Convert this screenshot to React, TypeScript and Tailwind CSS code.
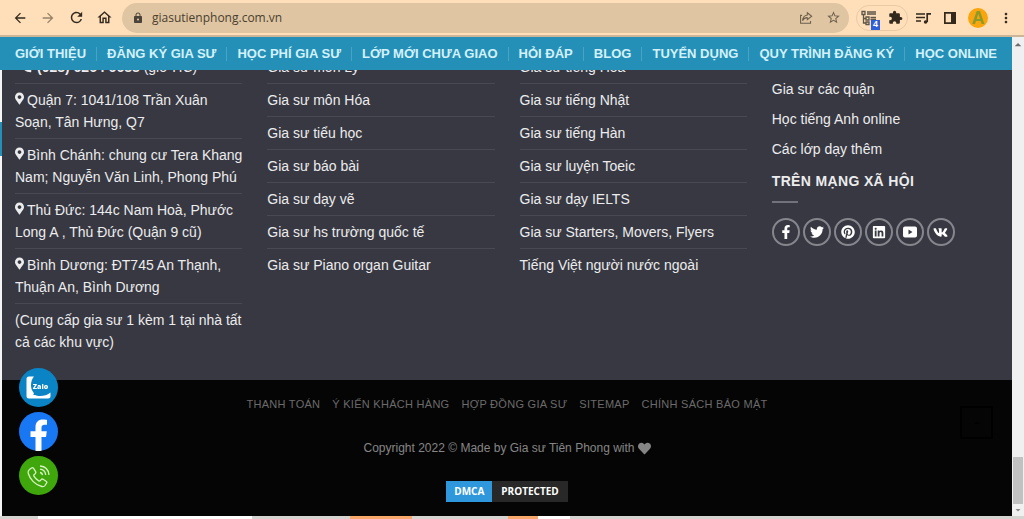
import type { ReactNode } from 'react';
import {
  FaFacebookF,
  FaHeart,
  FaLinkedin,
  FaMapMarkerAlt,
  FaPinterest,
  FaTwitter,
  FaVk,
} from 'react-icons/fa';
import {
  MdArrowBack,
  MdArrowDropDown,
  MdArrowDropUp,
  MdArrowForward,
  MdExtension,
  MdLock,
  MdMoreVert,
  MdOutlineHome,
  MdPhone,
  MdRefresh,
  MdStarBorder,
} from 'react-icons/md';

const menu = [
  'GIỚI THIỆU',
  'ĐĂNG KÝ GIA SƯ',
  'HỌC PHÍ GIA SƯ',
  'LỚP MỚI CHƯA GIAO',
  'HỎI ĐÁP',
  'BLOG',
  'TUYỂN DỤNG',
  'QUY TRÌNH ĐĂNG KÝ',
  'HỌC ONLINE',
];

const addresses = [
  ['Quận 7: 1041/108 Trần Xuân', 'Soạn, Tân Hưng, Q7'],
  ['Bình Chánh: chung cư Tera Khang', 'Nam; Nguyễn Văn Linh, Phong Phú'],
  ['Thủ Đức: 144c Nam Hoà, Phước', 'Long A , Thủ Đức (Quận 9 cũ)'],
  ['Bình Dương: ĐT745 An Thạnh,', 'Thuận An, Bình Dương'],
];

const subjects = [
  'Gia sư môn Lý',
  'Gia sư môn Hóa',
  'Gia sư tiểu học',
  'Gia sư báo bài',
  'Gia sư dạy vẽ',
  'Gia sư hs trường quốc tế',
  'Gia sư Piano organ Guitar',
];

const languages = [
  'Gia sư tiếng Hoa',
  'Gia sư tiếng Nhật',
  'Gia sư tiếng Hàn',
  'Gia sư luyện Toeic',
  'Gia sư dạy IELTS',
  'Gia sư Starters, Movers, Flyers',
  'Tiếng Việt người nước ngoài',
];

const others = ['Gia sư các quận', 'Học tiếng Anh online', 'Các lớp dạy thêm'];

const footerLinks = [
  'THANH TOÁN',
  'Ý KIẾN KHÁCH HÀNG',
  'HỢP ĐỒNG GIA SƯ',
  'SITEMAP',
  'CHÍNH SÁCH BẢO MẬT',
];

const YoutubeIcon = () => (
  <svg viewBox="0 0 14 14" className="size-[14px]" fill="currentColor">
    <path
      fillRule="evenodd"
      d="M2 1.5h10a2 2 0 0 1 2 2v7a2 2 0 0 1-2 2H2a2 2 0 0 1-2-2v-7a2 2 0 0 1 2-2Zm3.5 3v5L9.5 7Z"
    />
  </svg>
);

const socials = [
  { name: 'Facebook', icon: <FaFacebookF className="size-[14px]" /> },
  { name: 'Twitter', icon: <FaTwitter className="size-[14px]" /> },
  { name: 'Pinterest', icon: <FaPinterest className="size-[14px]" /> },
  { name: 'LinkedIn', icon: <FaLinkedin className="size-[14px]" /> },
  { name: 'YouTube', icon: <YoutubeIcon /> },
  { name: 'VK', icon: <FaVk className="size-[15px]" /> },
];

const ToolButton = ({
  label,
  children,
}: {
  label: string;
  children: ReactNode;
}) => (
  <button
    aria-label={label}
    className="flex size-[18px] shrink-0 items-center justify-center"
  >
    {children}
  </button>
);

const BrowserBar = () => (
  <header className="flex h-[37px] items-center border-b-2 border-[#cdb697] bg-[#ffdfb9] pr-[9px] pl-[11px] text-[#33291c]">
    <div className="flex gap-[10px]">
      <ToolButton label="Back">
        <MdArrowBack className="size-4" />
      </ToolButton>
      <ToolButton label="Forward">
        <MdArrowForward className="size-4 opacity-50" />
      </ToolButton>
      <ToolButton label="Reload">
        <MdRefresh className="size-[17px]" />
      </ToolButton>
      <ToolButton label="Home">
        <MdOutlineHome className="size-[17px]" />
      </ToolButton>
    </div>

    <div className="ml-[9px] flex h-[30px] flex-1 items-center rounded-full bg-[#dfc5a2] pr-[7px] pl-[10px]">
      <MdLock className="size-3 text-[#4b4339]" />
      <input
        aria-label="Address"
        defaultValue="giasutienphong.com.vn"
        className="ml-2 min-w-0 flex-1 bg-transparent font-['Open_Sans','Noto_Sans',sans-serif] text-[12px] text-[#4a3f30] outline-none"
      />
      <div className="flex gap-[9px] text-[#6d5f4c]">
        <ToolButton label="Share">
          <svg
            viewBox="0 0 16 16"
            className="size-[14px]"
            fill="none"
            stroke="currentColor"
            strokeWidth="1.2"
          >
            <path d="M3.5 5H1.8v9h11.4v-2.5M9.5 2l5 4-5 4V7.6C7 7.5 5.300 8.600 4 11c.3-3.600 2.200-6 5.500-6.500Z" />
          </svg>
        </ToolButton>
        <ToolButton label="Bookmark">
          <MdStarBorder className="size-[15px]" />
        </ToolButton>
      </div>
    </div>

    <div className="ml-[7px] flex h-[26px] items-center gap-2 rounded-full border border-[#e8caa4] px-[3px]">
      <ToolButton label="Page outline">
        <span className="relative">
          <svg
            viewBox="0 0 16 16"
            className="size-4"
            fill="none"
            stroke="#5d5548"
            strokeWidth="1.3"
          >
            <path d="M1 1.500h3v3H1zM2.500 5v8H5M2.500 8.500H5M5 7h3v3H5zM5 12h3v2.500H5zM6 2h9M6 4h9M9.500 7.500H15M9.500 9.500H15" />
          </svg>
          <span className="absolute -right-[3px] -bottom-[4px] flex h-[10px] w-[9px] items-center justify-center bg-[#2f5fd8] text-[9px] leading-none font-bold text-white">
            4
          </span>
        </span>
      </ToolButton>
      <ToolButton label="Extensions">
        <MdExtension className="size-[15px]" />
      </ToolButton>
    </div>

    <div className="ml-[6px] flex items-center gap-[9px]">
      <ToolButton label="Media">
        <svg
          viewBox="0 0 16 14"
          className="h-[14px] w-4"
          fill="none"
          stroke="currentColor"
          strokeWidth="1.7"
        >
          <path d="M1 3h9M1 6.500h9M1 10h5M12.200 11V2.800H16" />
          <circle cx="10.600" cy="11" r="1.800" fill="currentColor" stroke="none" />
        </svg>
      </ToolButton>
      <ToolButton label="Side panel">
        <svg viewBox="0 0 14 14" className="size-[14px]">
          <path
            fill="currentColor"
            fillRule="evenodd"
            d="M1 1h12v12H1zM2.700 2.700v8.600h5.300V2.700z"
          />
        </svg>
      </ToolButton>
      <button
        aria-label="Profile"
        className="flex size-5 items-center justify-center rounded-full bg-[#f9a50e] font-['Liberation_Sans',sans-serif] text-[18px] leading-none font-bold text-[#8b9a2a]"
      >
        A
      </button>
      <ToolButton label="More">
        <MdMoreVert className="size-4" />
      </ToolButton>
    </div>
  </header>
);

const MainMenu = () => (
  <nav className="relative z-10 flex h-[33px] items-center justify-between bg-[#2590b7] px-[15px] text-[13px] font-bold whitespace-nowrap text-[#d3f1fa]">
    {menu.map((item, i) => (
      <div key={item} className="contents">
        {i > 0 && <span className="h-[14px] w-px bg-[#49a3c3]" />}
        <a href="#">{item}</a>
      </div>
    ))}
  </nav>
);

const LinkList = ({ items }: { items: string[] }) => (
  <ul className="-mt-[19px] divide-y divide-[#484951]">
    {items.map((item) => (
      <li key={item} className="py-[5px]">
        <a href="#">{item}</a>
      </li>
    ))}
  </ul>
);

const Widgets = () => (
  <main className="grid flex-1 grid-cols-4 gap-[25px] overflow-hidden bg-[#373841] px-[13px] pb-5 text-[14px] leading-[22px] text-[#ececee]">
    <ul className="-mt-[19px] divide-y divide-[#484951] whitespace-nowrap">
      <li className="flex items-center gap-1 py-[5px] pl-1">
        <MdPhone className="size-[14px]" />
        <span>
          <strong>(028) 6264 6688</strong> (giờ HC)
        </span>
      </li>
      {addresses.map(([first, second]) => (
        <li key={first} className="py-[5px]">
          <FaMapMarkerAlt className="mr-[3px] mb-[5px] inline h-[13px] w-[9px]" />
          {first}
          <br />
          {second}
        </li>
      ))}
      <li className="py-[5px]">
        (Cung cấp gia sư 1 kèm 1 tại nhà tất
        <br />
        cả các khu vực)
      </li>
    </ul>

    <LinkList items={subjects} />
    <LinkList items={languages} />

    <section className="pt-1">
      <ul>
        {others.map((item) => (
          <li key={item} className="py-1">
            <a href="#">{item}</a>
          </li>
        ))}
      </ul>
      <h2 className="mt-[6px] leading-[22px] font-bold tracking-wide">
        TRÊN MẠNG XÃ HỘI
      </h2>
      <div className="mt-[9px] h-[2px] w-[26px] bg-[#71727b]" />
      <div className="mt-[15px] flex gap-[3px]">
        {socials.map(({ name, icon }) => (
          <a
            key={name}
            href="#"
            aria-label={name}
            className="flex size-7 items-center justify-center rounded-full border-2 border-[#85868e] text-white"
          >
            {icon}
          </a>
        ))}
      </div>
    </section>
  </main>
);

const Footer = () => (
  <footer className="flex flex-col items-center bg-[#050505] pt-4 pb-[14px]">
    <ul className="flex gap-3 text-[11px] leading-4 tracking-wide text-[#6b6b6b]">
      {footerLinks.map((item) => (
        <li key={item}>
          <a href="#">{item}</a>
        </li>
      ))}
    </ul>
    <p className="mt-7 flex items-center gap-[3px] text-[12px] leading-4 text-[#858585]">
      Copyright 2022 © Made by Gia sư Tiên Phong with
      <FaHeart className="size-[13px]" />
    </p>
    <a
      href="#"
      className="mt-[25px] flex h-[21px] font-['Open_Sans','Noto_Sans',sans-serif] text-[10px] leading-[21px] font-bold text-white"
    >
      <span className="bg-[#2f98dc] px-2">DMCA</span>
      <span className="bg-[#282828] px-[9px]">PROTECTED</span>
    </a>
  </footer>
);

const ContactButtons = () => (
  <div className="fixed bottom-6 left-[19px] z-20 flex flex-col gap-[5px]">
    <a href="#" aria-label="Zalo" className="size-[39px]">
      <svg viewBox="0 0 39 39">
        <circle cx="19.500" cy="19.500" r="19.500" fill="#0b84c6" />
        <path
          fill="#fff"
          d="M10 8.500h5c-3.800 4.500-4 12-.5 16 .8 1.200 0 2-.4 2.500 2.200-.3 3.400.6 5.400.9 4 .4 8-.3 12-3.400v3.500a2.500 2.500 0 0 1-2.500 2.500H10A2.500 2.500 0 0 1 7.500 28V11a2.500 2.500 0 0 1 2.500-2.500Z"
        />
        <text
          x="21.500"
          y="21"
          textAnchor="middle"
          fill="#fff"
          className="font-['Open_Sans',sans-serif] text-[7px] font-extrabold"
        >
          Zalo
        </text>
      </svg>
    </a>
    <a href="#" aria-label="Facebook" className="size-[39px]">
      <svg viewBox="0 0 39 39">
        <circle cx="19.500" cy="19.500" r="19.500" fill="#1877f2" />
        <path
          fill="#fff"
          d="M16.500 38.700V25h-5v-5.700h5v-4.300c0-5 3-7.500 7.300-7.500 2 0 4.200.4 4.200.4v4.800h-2.500c-2.400 0-3 1.400-3 3v3.600h5.300L27 25h-4.500v13.700a20 20 0 0 1-6 0Z"
        />
      </svg>
    </a>
    <a href="#" aria-label="Phone" className="size-[39px]">
      <svg viewBox="0 0 39 39" fill="none" stroke="#d9f3c4" strokeWidth="1.300">
        <circle cx="19.500" cy="19.500" r="19.500" fill="#3fa70c" stroke="none" />
        <path d="m10.500 13.500 2-1.500c.8-.5 1.600-.3 2.100.4l2 3.300c.5.8.3 1.500-.4 2l-1.200 1c-.4.400-.4.900-.1 1.400 1.200 2 2.800 3.600 4.800 4.800.6.300 1 .3 1.400-.2l1-1.100c.6-.7 1.300-.8 2-.4l3 2c.8.500 1 1.300.4 2L26 29.500c-.7 1-1.900 1.300-3.200 1-6.500-1.500-11.800-7-13.600-13.300-.4-1.500 0-2.800 1.300-3.700Z" />
        <path d="M21 16.500c1.600.2 2.300 1.100 2.500 2.700M21 13.200c3.300.3 5.300 2.500 5.700 5.800M21 10c5 .4 8.400 3.800 9 8.800" />
      </svg>
    </a>
  </div>
);

const ScrollBar = () => (
  <div className="flex w-3 shrink-0 flex-col items-center bg-[#f0f0f0] text-[#6c6c6c]">
    <MdArrowDropUp className="size-4 shrink-0" />
    <div className="mt-auto h-[47px] w-[10px] bg-[#c1c1c1]" />
    <MdArrowDropDown className="size-3 shrink-0 text-[#8a8a8a]" />
  </div>
);

export default function App() {
  return (
    <div className="flex min-h-screen flex-col font-['Liberation_Sans',Arial,sans-serif]">
      <BrowserBar />
      <div className="flex flex-1">
        <div className="flex min-w-0 flex-1 flex-col">
          <MainMenu />
          <div className="flex flex-1">
            <div className="w-[2px] shrink-0 bg-[#f4f4f4] pt-[52px]">
              <div className="h-[34px] bg-[#2590b7]" />
            </div>
            <div className="flex min-w-0 flex-1 flex-col">
              <Widgets />
              <Footer />
            </div>
          </div>
        </div>
        <ScrollBar />
      </div>
      <div className="flex h-[3px] bg-[#d6d4d1]">
        <span className="ml-[38px] w-[214px] bg-white" />
        <span className="ml-[98px] w-[62px] bg-[#f7a86a]" />
        <span className="ml-[96px] w-[30px] bg-[#f7a86a]" />
        <span className="w-[32px] bg-white" />
      </div>
      <ContactButtons />
      <button
        aria-label="Back to top"
        className="fixed right-[31px] bottom-20 z-20 flex size-[33px] items-center justify-center border-2 border-black text-black"
      >
        <MdArrowDropUp className="size-3" />
      </button>
    </div>
  );
}
